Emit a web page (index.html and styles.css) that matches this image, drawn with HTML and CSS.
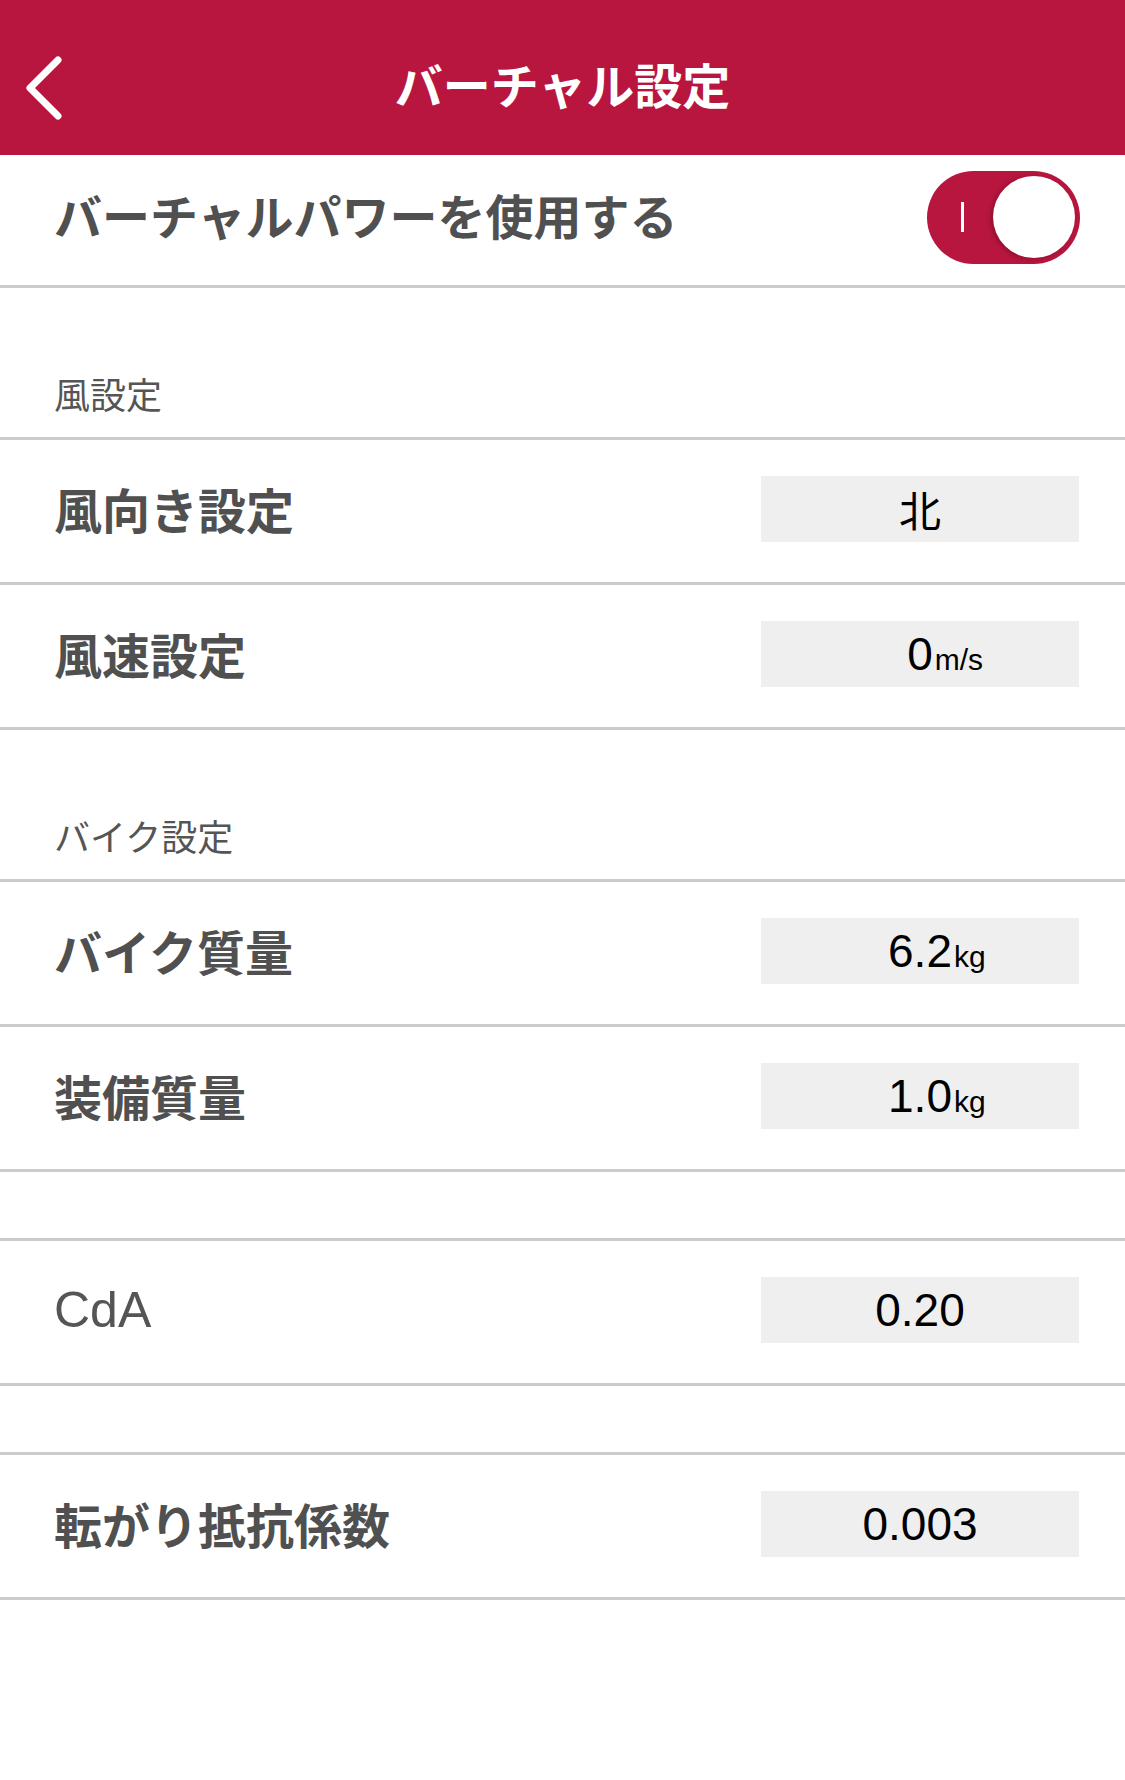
FILE: index.html
```html
<!DOCTYPE html>
<html lang="ja">
<head>
<meta charset="utf-8">
<title>バーチャル設定</title>
<link rel="stylesheet" href="styles.css">
</head>
<body>
<div class="screen">
  <header class="nav">
    <div class="nav-left">
      <svg class="back" width="44" height="72" viewBox="0 0 44 72" aria-hidden="true">
        <path d="M34 8 L6 36 L34 64" fill="none" stroke="#fff" stroke-width="7" stroke-linecap="round" stroke-linejoin="round"/>
      </svg>
    </div>
    <h1 class="nav-title">バーチャル設定</h1>
    <div class="nav-right"></div>
  </header>

  <div class="toggle-row">
    <span class="label">バーチャルパワーを使用する</span>
    <div class="switch">
      <span class="switch-mark"></span>
      <span class="switch-knob"></span>
    </div>
  </div>

  <div class="section">
    <span class="section-title">風設定</span>
  </div>
  <div class="row">
    <span class="label">風向き設定</span>
    <div class="value"><span class="num cjk">北</span></div>
  </div>
  <div class="row">
    <span class="label">風速設定</span>
    <div class="value"><span class="num">0</span><span class="unit">m/s</span></div>
  </div>

  <div class="section">
    <span class="section-title">バイク設定</span>
  </div>
  <div class="row">
    <span class="label">バイク質量</span>
    <div class="value"><span class="num">6.2</span><span class="unit">kg</span></div>
  </div>
  <div class="row">
    <span class="label">装備質量</span>
    <div class="value"><span class="num">1.0</span><span class="unit">kg</span></div>
  </div>

  <div class="spacer"></div>
  <div class="row">
    <span class="label latin">CdA</span>
    <div class="value"><span class="num">0.20</span></div>
  </div>

  <div class="spacer"></div>
  <div class="row">
    <span class="label">転がり抵抗係数</span>
    <div class="value"><span class="num">0.003</span></div>
  </div>
</div>
</body>
</html>
```

FILE: styles.css
```css
* {
  box-sizing: border-box;
}

html, body {
  margin: 0;
  padding: 0;
  background: #ffffff;
}

body {
  font-family: "Noto Sans CJK JP", "Noto Sans", sans-serif;
}

.screen {
  width: 1125px;
  min-height: 1780px;
  background: #ffffff;
}

/* Header */
.nav {
  height: 155px;
  background: #b8163f;
  display: grid;
  grid-template-columns: 1fr auto 1fr;
  align-items: center;
  padding-top: 20px;
}

.nav-left {
  display: flex;
  align-items: center;
  padding-left: 24px;
}

.back {
  display: block;
}

.nav-title {
  margin: 0 0 9px;
  color: #ffffff;
  font-size: 48px;
  font-weight: 700;
  line-height: 1;
  letter-spacing: 0;
}

/* Rows */
.label {
  color: #505050;
  font-size: 48px;
  font-weight: 700;
  line-height: 1;
  margin-bottom: 2px;
}

.label.latin {
  font-family: "Liberation Sans", Arial, sans-serif;
  font-size: 50px;
  font-weight: 400;
  color: #555555;
  margin-bottom: 0;
}

.toggle-row {
  height: 133px;
  border-bottom: 3px solid #cbcbcb;
  display: flex;
  align-items: center;
  justify-content: space-between;
  padding: 0 45px 6px 54px;
}

.toggle-row .label {
  margin-bottom: 6px;
}

.switch {
  width: 153px;
  height: 93px;
  border-radius: 47px;
  background: #b8163f;
  display: flex;
  align-items: center;
  padding: 0 5px 0 34px;
}

.switch-mark {
  width: 3px;
  height: 30px;
  background: #ffffff;
}

.switch-knob {
  margin-left: auto;
  width: 82px;
  height: 82px;
  border-radius: 50%;
  background: #ffffff;
  box-shadow: -2px 1px 5px rgba(60, 0, 15, 0.35);
}

.section {
  height: 152px;
  border-bottom: 3px solid #cbcbcb;
  display: flex;
  align-items: flex-end;
  padding: 0 0 26px 54px;
}

.section-title {
  color: #555555;
  font-size: 36px;
  font-weight: 400;
  line-height: 1;
}

.row {
  height: 145px;
  border-bottom: 3px solid #cbcbcb;
  display: flex;
  align-items: center;
  justify-content: space-between;
  padding: 0 46px 5px 54px;
}

.value {
  width: 318px;
  height: 66px;
  background: #efefef;
  display: grid;
  grid-template-columns: 1fr auto 1fr;
  align-items: baseline;
  align-content: center;
  font-family: "Liberation Sans", Arial, "Noto Sans CJK JP", sans-serif;
  color: #000000;
}

.num {
  grid-column: 2;
  font-size: 46px;
  line-height: 1;
}

.num.cjk {
  font-family: "Noto Sans CJK JP", sans-serif;
  font-size: 42px;
  font-weight: 400;
}

.unit {
  grid-column: 3;
  font-size: 30px;
  line-height: 1;
  padding-left: 2px;
}

.spacer {
  height: 69px;
  border-bottom: 3px solid #cbcbcb;
}
```
